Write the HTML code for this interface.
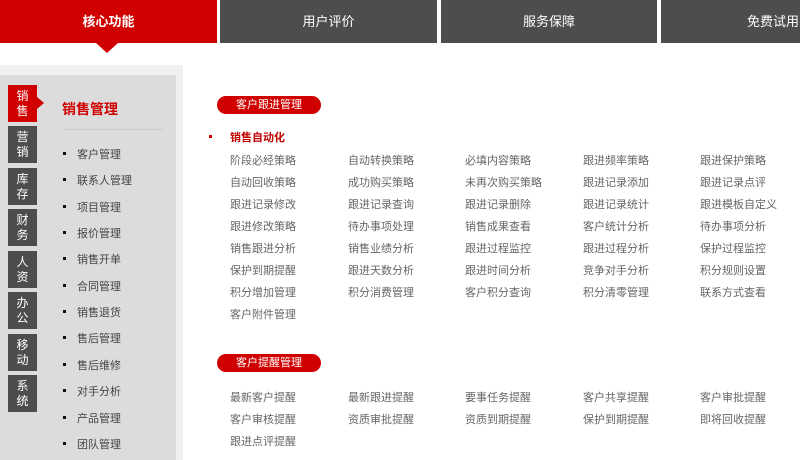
<!DOCTYPE html>
<html><head><meta charset="utf-8"><style>
*{margin:0;padding:0;box-sizing:border-box}
html,body{width:800px;height:460px;overflow:hidden}
body{background:#fff;font-family:"Liberation Sans","Microsoft YaHei","Noto Sans CJK SC",sans-serif;position:relative}
.tab{position:absolute;top:0;height:43px;background:#4d4d4d;color:#fff;font-size:13px;line-height:43px;text-align:center}
.tri{position:absolute;left:96px;top:43px;width:0;height:0;border-left:11px solid transparent;border-right:11px solid transparent;border-top:10px solid #d00000}
.outer{position:absolute;left:0;top:65px;width:183px;height:395px;background:#eef0f2}
.inner{position:absolute;left:0;top:75px;width:176px;height:385px;background:#dcdcdc}
.vt{position:absolute;left:8px;width:29px;height:37px;background:#4d4d4d;color:#fff;font-size:12px;line-height:15px;text-align:center;padding-top:4px}
.vt.a{background:#d00000}
.vt.a:after{content:"";position:absolute;left:29px;top:12px;border-top:6px solid transparent;border-bottom:6px solid transparent;border-left:7px solid #d00000}
.st{position:absolute;left:62px;top:99px;font-size:14px;font-weight:bold;color:#d00000}
.line{position:absolute;left:63px;top:129px;width:100px;height:1px;background:#ccc}
.li{position:absolute;left:77px;font-size:11px;color:#444}
.li:before{content:"";position:absolute;left:-14px;top:6px;width:3px;height:3px;background:#111}
.pill{position:absolute;left:217px;width:104px;height:18px;border-radius:9px;background:#d00000;color:#fff;font-size:11px;line-height:18px;text-align:center}
.it{position:absolute;font-size:11px;color:#666;white-space:nowrap}
</style></head><body>
<div class="tab" style="left:0;width:217px;background:#d00000;font-weight:bold">核心功能</div>
<div class="tab" style="left:220px;width:217px">用户评价</div>
<div class="tab" style="left:441px;width:216px">服务保障</div>
<div class="tab" style="left:661px;width:139px;text-align:left;padding-left:86px">免费试用</div>
<div class="tri"></div>
<div class="outer"></div><div class="inner"></div>
<div class="vt a" style="top:85px">销<br>售</div>
<div class="vt" style="top:126px">营<br>销</div>
<div class="vt" style="top:168px">库<br>存</div>
<div class="vt" style="top:209px">财<br>务</div>
<div class="vt" style="top:251px">人<br>资</div>
<div class="vt" style="top:292px">办<br>公</div>
<div class="vt" style="top:334px">移<br>动</div>
<div class="vt" style="top:375px">系<br>统</div>
<div class="st">销售管理</div><div class="line"></div>
<div class="li" style="top:146px">客户管理</div>
<div class="li" style="top:172px">联系人管理</div>
<div class="li" style="top:199px">项目管理</div>
<div class="li" style="top:225px">报价管理</div>
<div class="li" style="top:251px">销售开单</div>
<div class="li" style="top:278px">合同管理</div>
<div class="li" style="top:304px">销售退货</div>
<div class="li" style="top:330px">售后管理</div>
<div class="li" style="top:357px">售后维修</div>
<div class="li" style="top:383px">对手分析</div>
<div class="li" style="top:410px">产品管理</div>
<div class="li" style="top:436px">团队管理</div>
<div class="pill" style="top:96px">客户跟进管理</div>
<div style="position:absolute;left:209px;top:135px;width:3px;height:3px;background:#d00000"></div>
<div style="position:absolute;left:230px;top:129px;font-size:11px;font-weight:bold;color:#c00000">销售自动化</div>
<div class="pill" style="top:354px">客户提醒管理</div>
<div id="g"></div>
<script>
var A=[["阶段必经策略","自动转换策略","必填内容策略","跟进频率策略","跟进保护策略"],["自动回收策略","成功购买策略","未再次购买策略","跟进记录添加","跟进记录点评"],["跟进记录修改","跟进记录查询","跟进记录删除","跟进记录统计","跟进模板自定义"],["跟进修改策略","待办事项处理","销售成果查看","客户统计分析","待办事项分析"],["销售跟进分析","销售业绩分析","跟进过程监控","跟进过程分析","保护过程监控"],["保护到期提醒","跟进天数分析","跟进时间分析","竞争对手分析","积分规则设置"],["积分增加管理","积分消费管理","客户积分查询","积分清零管理","联系方式查看"],["客户附件管理"]];
var B=[["最新客户提醒","最新跟进提醒","要事任务提醒","客户共享提醒","客户审批提醒"],["客户审核提醒","资质审批提醒","资质到期提醒","保护到期提醒","即将回收提醒"],["跟进点评提醒"]];
var X=[230,348,465,583,700],h="";
function f(a,y0){a.forEach(function(r,i){r.forEach(function(t,j){h+='<div class="it" style="left:'+X[j]+'px;top:'+(y0+i*22)+'px">'+t+'</div>';});});}
f(A,152);f(B,389);document.getElementById('g').innerHTML=h;
</script>
</body></html>
